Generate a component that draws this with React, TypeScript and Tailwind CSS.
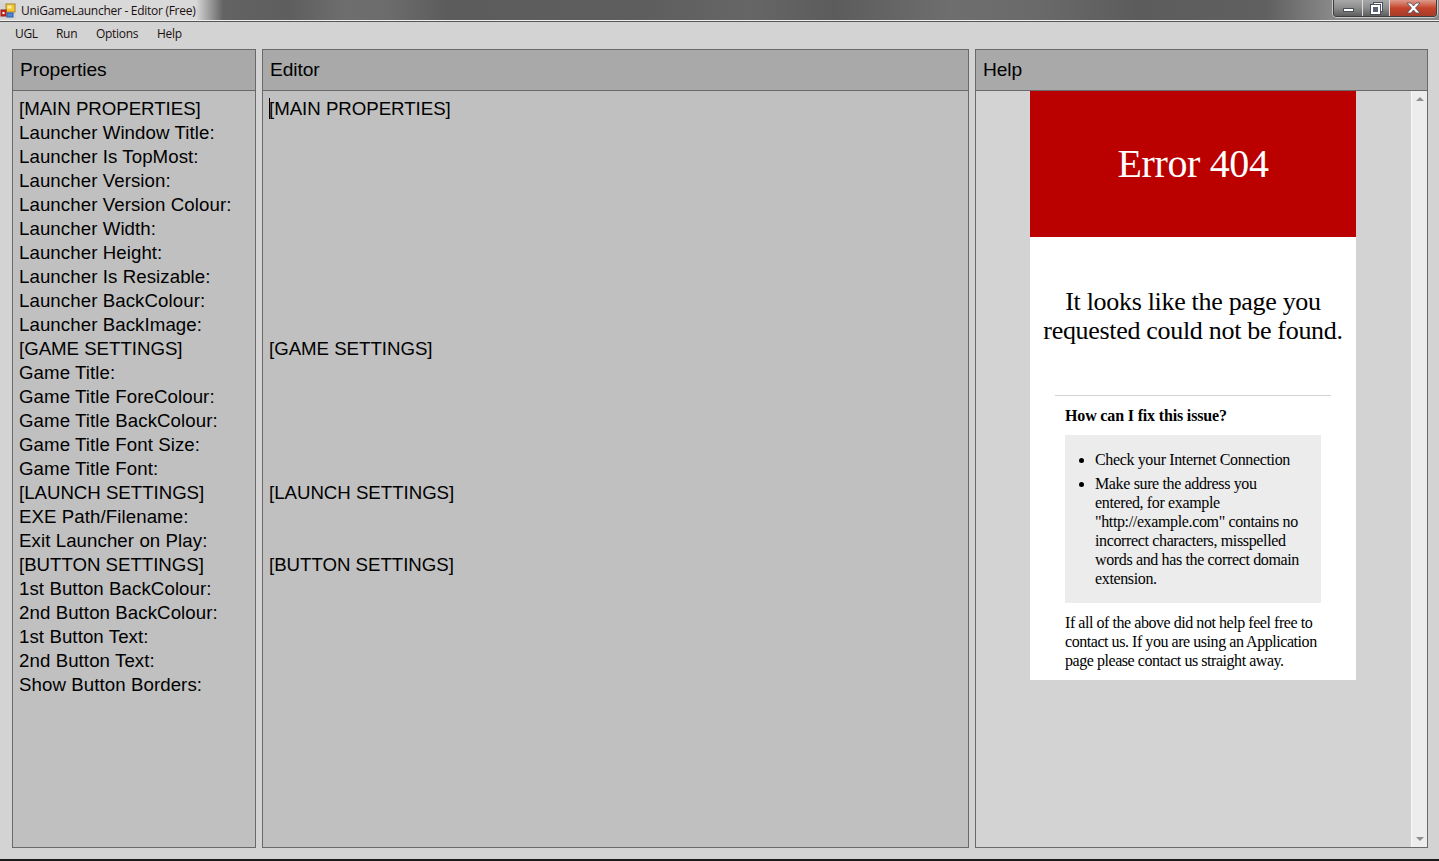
import React from 'react';

const propertyLines = [
  '[MAIN PROPERTIES]',
  'Launcher Window Title:',
  'Launcher Is TopMost:',
  'Launcher Version:',
  'Launcher Version Colour:',
  'Launcher Width:',
  'Launcher Height:',
  'Launcher Is Resizable:',
  'Launcher BackColour:',
  'Launcher BackImage:',
  '[GAME SETTINGS]',
  'Game Title:',
  'Game Title ForeColour:',
  'Game Title BackColour:',
  'Game Title Font Size:',
  'Game Title Font:',
  '[LAUNCH SETTINGS]',
  'EXE Path/Filename:',
  'Exit Launcher on Play:',
  '[BUTTON SETTINGS]',
  '1st Button BackColour:',
  '2nd Button BackColour:',
  '1st Button Text:',
  '2nd Button Text:',
  'Show Button Borders:',
];

// same rows as the properties list, only the section headers are filled in
const editorLines = propertyLines.map((line) => (line.startsWith('[') ? line : ''));

const menuItems = [
  { label: 'UGL', className: 'w-[41px]' },
  { label: 'Run', className: 'w-[40px]' },
  { label: 'Options', className: 'w-[61px]' },
  { label: 'Help', className: 'w-[40px]' },
];

const AppIcon = () => (
  <svg width="16" height="16" viewBox="0 0 16 16" className="shrink-0">
    <rect x="0" y="0" width="16" height="16" fill="#d4d4d4" />
    <rect x="6" y="1" width="9" height="8" fill="#f5c534" stroke="#a98a2a" />
    <rect x="7.5" y="2.5" width="4" height="3" fill="#fdeea0" />
    <rect x="1" y="7" width="5" height="6" fill="#d8281c" stroke="#8c1c14" />
    <rect x="2.5" y="9" width="2" height="2" fill="#ffffff" />
    <rect x="7" y="10" width="6" height="4" fill="#4a86dc" stroke="#2c5aa8" />
  </svg>
);

const WindowButtons = () => (
  <div className="flex h-[17px] w-[104px] overflow-hidden rounded-b-[4px] border border-t-0 border-[#3c3c3c] shadow-[0_0_0_1px_rgba(255,255,255,0.55)]">
    <div className="flex w-[29px] items-center justify-center border-r border-[#dddddd] bg-gradient-to-b from-[#a8a8a8] via-[#8c8c8c] to-[#5e5e5e]">
      <div className="mt-[4px] h-[4px] w-[11px] border border-[#4a4f5c] bg-white" />
    </div>
    <div className="flex w-[27px] items-center justify-center border-r border-[#dddddd] bg-gradient-to-b from-[#a8a8a8] via-[#8c8c8c] to-[#5e5e5e]">
      <svg width="13" height="13" viewBox="0 0 13 13">
        <rect x="3.5" y="0.5" width="9" height="9" fill="#ffffff" stroke="#4a4f5c" />
        <rect x="0.5" y="2.5" width="10" height="10" fill="#ffffff" stroke="#4a4f5c" />
        <rect x="3" y="5" width="5" height="5" fill="#5c6270" />
      </svg>
    </div>
    <div className="flex flex-1 items-center justify-center bg-gradient-to-b from-[#dd9a8c] via-[#c4432a] to-[#a83c28]">
      <svg width="15" height="12" viewBox="0 0 15 12">
        <path d="M1 1h4l2.500 3L10 1h4L9.500 6 14 11h-4L7.500 8 5 11H1l4.500-5z" fill="#ffffff" stroke="#4a4f5c" strokeWidth="0.8" />
      </svg>
    </div>
  </div>
);

const TitleBar = () => (
  <div className="flex h-[20px] shrink-0 items-start justify-between bg-[linear-gradient(90deg,#d9d9d9_0%,#d9d9d9_13.6%,#a0a0a0_14.5%,#636363_15.5%,#5e5e5e_20%,#6e6e6e_24%,#6c6c6c_27%,#5c5c5c_31%,#5e5e5e_45%,#666666_52%,#5c5c5c_58%,#6e6e6e_66%,#6a6a6a_72%,#5c5c5c_79%,#606060_88%,#888888_92.5%)]">
    <div className="flex items-center gap-[4px] pt-[2px] font-['Open_Sans',sans-serif] text-[12px] leading-[17px] text-[#1a1010]">
      <AppIcon />
      <span className="ml-[1px] tracking-[-0.28px]">UniGameLauncher - Editor (Free)</span>
    </div>
    <div className="mr-[2px]">
      <WindowButtons />
    </div>
  </div>
);

const Panel = ({ title, className, children }: { title: string; className: string; children: React.ReactNode }) => (
  <section className={`flex flex-col border border-[#696969] ${className}`}>
    <div className="flex h-[41px] shrink-0 items-center border-b border-[#696969] bg-[#a9a9a9] pl-[7px] pt-px text-[19.2px] tracking-[-0.1px] text-black">
      {title}
    </div>
    {children}
  </section>
);

const LinesBox = ({ lines, caret }: { lines: string[]; caret?: boolean }) => (
  <div className="relative flex-1 bg-[#c0c0c0] pl-[6px] pt-[6px] text-[18.67px] leading-[24px] text-black">
    {caret && <div className="absolute left-[6px] top-[7px] h-[21px] w-px bg-black" />}
    {lines.map((line, i) => (
      <div key={i} className={`h-[24px] whitespace-nowrap ${line.startsWith('[') ? 'tracking-[-0.02px]' : 'tracking-[0.08px]'}`}>
        {line}
      </div>
    ))}
  </div>
);

const ErrorPage = () => (
  <div className="flex flex-1 justify-center pr-[1px]">
    <div className="h-[589px] w-[326px] bg-white font-['Liberation_Serif',serif] text-black">
      <div className="flex h-[146px] items-center justify-center bg-[#bb0000] text-[40px] tracking-[-0.35px] text-white">Error 404</div>
      <div className="px-[5px] pb-[50px] pt-[50px] text-center text-[26px] leading-[29px] tracking-[-0.31px]">
        It looks like the page you requested could not be found.
      </div>
      <div className="mx-[25px] h-px bg-[#d3d3d3]" />
      <div className="px-[35px]">
        <div className="pb-[10px] pt-[10px] text-[16px] font-bold leading-[19px] tracking-[-0.16px]">How can I fix this issue?</div>
        <ul className="h-[168px] list-disc bg-[#ececec] pl-[30px] pr-[17px] pt-[15px] text-[16px] leading-[19px] tracking-[-0.36px]">
          <li className="mb-[5px]">Check your Internet Connection</li>
          <li>Make sure the address you entered, for example "http://example.com" contains no incorrect characters, misspelled words and has the correct domain extension.</li>
        </ul>
        <p className="pt-[10px] text-[16px] leading-[19px] tracking-[-0.45px]">
          If all of the above did not help feel free to contact us. If you are using an Application page please contact us straight away.
        </p>
      </div>
    </div>
  </div>
);

const ScrollBar = () => (
  <div className="flex w-[16px] shrink-0 flex-col items-center justify-between border-l border-[#f8f8f8] bg-[#ededed] py-[6px]">
    <div className="h-0 w-0 border-x-[4px] border-b-[4px] border-x-transparent border-b-[#8f8f8f]" />
    <div className="h-0 w-0 border-x-[4px] border-t-[4px] border-x-transparent border-t-[#8f8f8f]" />
  </div>
);

export default function App() {
  return (
    <div className="flex h-[861px] w-[1439px] flex-col overflow-hidden bg-[#d3d3d3] font-['Liberation_Sans',sans-serif]">
      <TitleBar />
      <div className="h-px shrink-0 bg-[#f0f0f0]" />
      <div className="h-px shrink-0 bg-[#555555]" />
      <nav className="flex h-[27px] shrink-0 items-start pl-[5px] pt-[3px] font-['Open_Sans',sans-serif] text-[12px] leading-[17px] text-[#1a1010]">
        {menuItems.map((item) => (
          <span key={item.label} className={`${item.className} pl-[10px] tracking-[-0.3px]`}>
            {item.label}
          </span>
        ))}
      </nav>
      <main className="flex h-[799px] shrink-0 gap-[6px] pl-[12px] pr-[11px]">
        <Panel title="Properties" className="w-[244px]">
          <LinesBox lines={propertyLines} />
        </Panel>
        <Panel title="Editor" className="w-[707px]">
          <LinesBox lines={editorLines} caret />
        </Panel>
        <Panel title="Help" className="flex-1">
          <div className="flex flex-1 bg-[#d3d3d3]">
            <ErrorPage />
            <ScrollBar />
          </div>
        </Panel>
      </main>
      <div className="flex-1" />
      <div className="h-[2px] shrink-0 bg-[#1a1a1a]" />
    </div>
  );
}
